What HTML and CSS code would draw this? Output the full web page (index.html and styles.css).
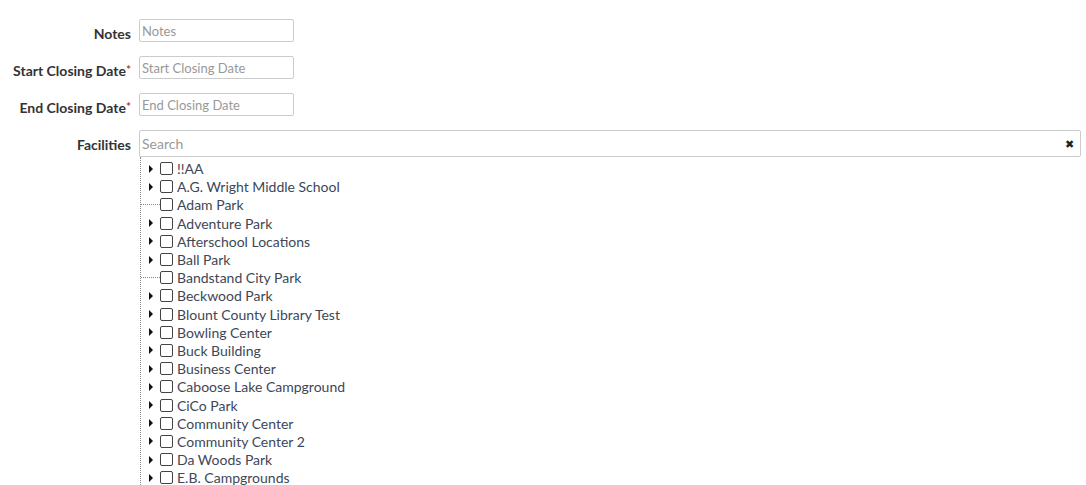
FILE: index.html
```html
<!DOCTYPE html>
<html>
<head>
<meta charset="utf-8">
<link rel="stylesheet" href="styles.css">
</head>
<body>
<form class="form">
  <div class="row">
    <label class="label">Notes</label>
    <input class="input" placeholder="Notes">
  </div>
  <div class="row">
    <label class="label">Start Closing Date<span class="req">*</span></label>
    <input class="input" placeholder="Start Closing Date">
  </div>
  <div class="row">
    <label class="label">End Closing Date<span class="req">*</span></label>
    <input class="input" placeholder="End Closing Date">
  </div>
  <div class="row facilities">
    <label class="label">Facilities</label>
    <div class="fac">
      <div class="search">
        <input class="search-input" placeholder="Search">
        <span class="clear">✖</span>
      </div>
      <ul class="tree">
        <li class="node"><span class="caret"></span><span class="cb"></span>!!AA</li>
        <li class="node"><span class="caret"></span><span class="cb"></span>A.G. Wright Middle School</li>
        <li class="node leaf"><span class="caret"></span><span class="cb"></span>Adam Park</li>
        <li class="node"><span class="caret"></span><span class="cb"></span>Adventure Park</li>
        <li class="node"><span class="caret"></span><span class="cb"></span>Afterschool Locations</li>
        <li class="node"><span class="caret"></span><span class="cb"></span>Ball Park</li>
        <li class="node leaf"><span class="caret"></span><span class="cb"></span>Bandstand City Park</li>
        <li class="node"><span class="caret"></span><span class="cb"></span>Beckwood Park</li>
        <li class="node"><span class="caret"></span><span class="cb"></span>Blount County Library Test</li>
        <li class="node"><span class="caret"></span><span class="cb"></span>Bowling Center</li>
        <li class="node"><span class="caret"></span><span class="cb"></span>Buck Building</li>
        <li class="node"><span class="caret"></span><span class="cb"></span>Business Center</li>
        <li class="node"><span class="caret"></span><span class="cb"></span>Caboose Lake Campground</li>
        <li class="node"><span class="caret"></span><span class="cb"></span>CiCo Park</li>
        <li class="node"><span class="caret"></span><span class="cb"></span>Community Center</li>
        <li class="node"><span class="caret"></span><span class="cb"></span>Community Center 2</li>
        <li class="node"><span class="caret"></span><span class="cb"></span>Da Woods Park</li>
        <li class="node"><span class="caret"></span><span class="cb"></span>E.B. Campgrounds</li>
      </ul>
    </div>
  </div>
</form>
</body>
</html>
```

FILE: styles.css
```css
html, body {
  margin: 0;
  padding: 0;
  overflow: hidden;
  background: #fff;
}
body {
  font-family: Lato, "Open Sans", sans-serif;
  color: #333;
}
.form {
  padding: 19px 5px 0 0;
  display: flex;
  flex-direction: column;
  gap: 14px;
}
.row {
  display: flex;
  align-items: flex-start;
  gap: 8px;
}
.label {
  width: 131px;
  flex: none;
  text-align: right;
  font-weight: 700;
  font-size: 14px;
  line-height: 23px;
  height: 23px;
  padding-top: 3px;
  box-sizing: border-box;
  color: #333;
  white-space: nowrap;
}
.req {
  color: #a94442;
  font-size: 12px;
  vertical-align: top;
  position: relative;
  top: -1px;
}
.input {
  width: 155px;
  height: 23px;
  box-sizing: border-box;
  border: 1px solid #ccc;
  border-radius: 2px;
  padding: 0 2px;
  font-family: Lato, sans-serif;
  font-size: 13px;
  color: #555;
  outline: none;
}
.input::placeholder { color: #999; }
.facilities .label {
  line-height: 27px;
  height: 27px;
  padding-top: 1px;
}
.fac {
  flex: 1;
  min-width: 0;
}
.search {
  position: relative;
  height: 27px;
  box-sizing: border-box;
  border: 1px solid #ccc;
  border-radius: 2px;
}
.search-input {
  width: 100%;
  height: 25px;
  border: 0;
  padding: 0 2px;
  box-sizing: border-box;
  font-family: Lato, sans-serif;
  font-size: 14px;
  outline: none;
  background: transparent;
}
.search-input::placeholder { color: #999; }
.clear {
  position: absolute;
  right: 6px;
  top: 6px;
  font-size: 11px;
  line-height: 13px;
  color: #222;
}
.tree {
  list-style: none;
  margin: 0;
  padding: 2.5px 0 0 0;
  border-left: 1px dotted #888;
  margin-left: 1px;
}
.node {
  display: flex;
  align-items: center;
  height: 18.2px;
  font-size: 14px;
  color: #3d4758;
  white-space: nowrap;
}
.caret {
  width: 19px;
  height: 18px;
  flex: none;
  position: relative;
}
.caret::after {
  content: "";
  position: absolute;
  left: 8px;
  top: 5px;
  border-left: 4px solid #111;
  border-top: 4px solid transparent;
  border-bottom: 4px solid transparent;
}
.leaf .caret::after { display: none; }
.leaf .caret::before {
  content: "";
  position: absolute;
  left: 0;
  right: 0;
  top: 8px;
  border-top: 1px dotted #888;
}
.cb {
  width: 11px;
  height: 11px;
  border: 1px solid #444;
  border-radius: 2px;
  flex: none;
  margin-right: 4px;
  background: #fff;
}
```
